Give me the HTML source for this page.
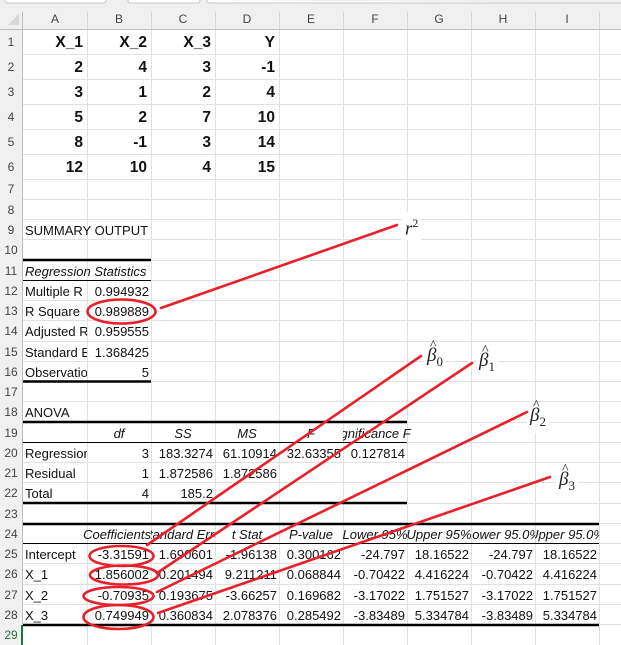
<!DOCTYPE html>
<html><head><meta charset="utf-8">
<style>
html,body{margin:0;padding:0;}
body{width:621px;height:645px;position:relative;overflow:hidden;background:#fff;font-family:"Liberation Sans",Arial,sans-serif;}
.c{position:absolute;height:20px;line-height:21px;font-size:13px;color:#111;white-space:nowrap;overflow:hidden;display:flex;align-items:center;padding:0 2px;box-sizing:border-box;}
.r{justify-content:flex-end;}
.m{justify-content:center;}
.i{font-style:italic;}
.b{font-weight:bold;font-size:15.5px;height:25px;padding-right:4px;}
.h{position:absolute;font-size:12px;color:#444;text-align:center;}
.lbl{position:absolute;font-family:"Liberation Serif",serif;font-style:italic;font-size:19px;color:#222;background:#fff;line-height:22px;}
.lbl sub{font-style:normal;font-size:13px;}
.hat{position:relative;display:inline-block;}
.hat i{position:absolute;left:3px;top:-10px;font-style:normal;font-size:14px;}
</style></head><body>
<svg width="621" height="645" style="position:absolute;left:0;top:0" xmlns="http://www.w3.org/2000/svg">
<rect x="0" y="0" width="621" height="29" fill="#f0f0f0"/>
<rect x="0" y="29" width="23" height="616" fill="#f0f0f0"/>
<path d="M5 0 V1 Q5 3 8 3 H103 Q106 3 106 1 V0 M128 0 V1 Q128 3 131 3 H197 Q200 3 200 1 V0 M207 0 V1 Q207 3 210 3 H621" fill="#fff" stroke="#c8c8c8"/>
<polygon points="8,25 19,25 19,14" fill="#d6d6d6"/>
<g stroke="#e1e1e1" stroke-width="1">
<line x1="87.5" y1="29" x2="87.5" y2="645"/><line x1="151.5" y1="29" x2="151.5" y2="645"/>
<line x1="215.5" y1="29" x2="215.5" y2="645"/><line x1="279.5" y1="29" x2="279.5" y2="645"/>
<line x1="343.5" y1="29" x2="343.5" y2="645"/><line x1="407.5" y1="29" x2="407.5" y2="645"/>
<line x1="471.5" y1="29" x2="471.5" y2="645"/><line x1="535.5" y1="29" x2="535.5" y2="645"/>
<line x1="599.5" y1="29" x2="599.5" y2="645"/>
<line x1="23" y1="54.5" x2="621" y2="54.5"/><line x1="23" y1="79.5" x2="621" y2="79.5"/>
<line x1="23" y1="104.5" x2="621" y2="104.5"/><line x1="23" y1="129.5" x2="621" y2="129.5"/>
<line x1="23" y1="154.5" x2="621" y2="154.5"/><line x1="23" y1="179.5" x2="621" y2="179.5"/>
<line x1="23" y1="199.5" x2="621" y2="199.5"/><line x1="23" y1="219.5" x2="621" y2="219.5"/>
<line x1="23" y1="239.5" x2="621" y2="239.5"/><line x1="23" y1="260.5" x2="621" y2="260.5"/>
<line x1="23" y1="280.5" x2="621" y2="280.5"/><line x1="23" y1="300.5" x2="621" y2="300.5"/>
<line x1="23" y1="320.5" x2="621" y2="320.5"/><line x1="23" y1="341.5" x2="621" y2="341.5"/>
<line x1="23" y1="361.5" x2="621" y2="361.5"/><line x1="23" y1="381.5" x2="621" y2="381.5"/>
<line x1="23" y1="401.5" x2="621" y2="401.5"/><line x1="23" y1="422.5" x2="621" y2="422.5"/>
<line x1="23" y1="442.5" x2="621" y2="442.5"/><line x1="23" y1="462.5" x2="621" y2="462.5"/>
<line x1="23" y1="482.5" x2="621" y2="482.5"/><line x1="23" y1="503.5" x2="621" y2="503.5"/>
<line x1="23" y1="523.5" x2="621" y2="523.5"/><line x1="23" y1="543.5" x2="621" y2="543.5"/>
<line x1="23" y1="563.5" x2="621" y2="563.5"/><line x1="23" y1="584.5" x2="621" y2="584.5"/>
<line x1="23" y1="604.5" x2="621" y2="604.5"/><line x1="23" y1="624.5" x2="621" y2="624.5"/>
</g>
<g stroke="#d4d4d4"><line x1="87.5" y1="12" x2="87.5" y2="29"/><line x1="151.5" y1="12" x2="151.5" y2="29"/><line x1="215.5" y1="12" x2="215.5" y2="29"/><line x1="279.5" y1="12" x2="279.5" y2="29"/><line x1="343.5" y1="12" x2="343.5" y2="29"/><line x1="407.5" y1="12" x2="407.5" y2="29"/><line x1="471.5" y1="12" x2="471.5" y2="29"/><line x1="535.5" y1="12" x2="535.5" y2="29"/><line x1="599.5" y1="12" x2="599.5" y2="29"/></g>
<line x1="0" y1="29.5" x2="621" y2="29.5" stroke="#bdbdbd"/>
<line x1="22.5" y1="12" x2="22.5" y2="645" stroke="#bdbdbd"/>
<line x1="22" y1="625" x2="22" y2="645" stroke="#217346" stroke-width="2"/>
<g stroke="#000">
<line x1="23" y1="260" x2="151" y2="260" stroke-width="2.5"/>
<line x1="23" y1="280.5" x2="151" y2="280.5" stroke-width="1"/>
<line x1="23" y1="381.5" x2="151" y2="381.5" stroke-width="2.5"/>
<line x1="23" y1="422" x2="407" y2="422" stroke-width="2.5"/>
<line x1="23" y1="442.5" x2="407" y2="442.5" stroke-width="1"/>
<line x1="23" y1="503" x2="407" y2="503" stroke-width="2.5"/>
<line x1="23" y1="524" x2="599" y2="524" stroke-width="2.5"/>
<line x1="23" y1="543.5" x2="599" y2="543.5" stroke-width="1"/>
<line x1="23" y1="625" x2="599" y2="625" stroke-width="2.5"/>
</g>
</svg>

<div class="h" style="left:23px;width:64px;top:12px">A</div>
<div class="h" style="left:87px;width:64px;top:12px">B</div>
<div class="h" style="left:151px;width:64px;top:12px">C</div>
<div class="h" style="left:215px;width:64px;top:12px">D</div>
<div class="h" style="left:279px;width:64px;top:12px">E</div>
<div class="h" style="left:343px;width:64px;top:12px">F</div>
<div class="h" style="left:407px;width:64px;top:12px">G</div>
<div class="h" style="left:471px;width:64px;top:12px">H</div>
<div class="h" style="left:535px;width:64px;top:12px">I</div>
<div class="h" style="left:0;width:22px;top:35px">1</div>
<div class="h" style="left:0;width:22px;top:60px">2</div>
<div class="h" style="left:0;width:22px;top:85px">3</div>
<div class="h" style="left:0;width:22px;top:110px">4</div>
<div class="h" style="left:0;width:22px;top:135px">5</div>
<div class="h" style="left:0;width:22px;top:160px">6</div>
<div class="h" style="left:0;width:22px;top:182px">7</div>
<div class="h" style="left:0;width:22px;top:203px">8</div>
<div class="h" style="left:0;width:22px;top:223px">9</div>
<div class="h" style="left:0;width:22px;top:243px">10</div>
<div class="h" style="left:0;width:22px;top:264px">11</div>
<div class="h" style="left:0;width:22px;top:284px">12</div>
<div class="h" style="left:0;width:22px;top:304px">13</div>
<div class="h" style="left:0;width:22px;top:324px">14</div>
<div class="h" style="left:0;width:22px;top:345px">15</div>
<div class="h" style="left:0;width:22px;top:365px">16</div>
<div class="h" style="left:0;width:22px;top:385px">17</div>
<div class="h" style="left:0;width:22px;top:405px">18</div>
<div class="h" style="left:0;width:22px;top:426px">19</div>
<div class="h" style="left:0;width:22px;top:446px">20</div>
<div class="h" style="left:0;width:22px;top:466px">21</div>
<div class="h" style="left:0;width:22px;top:486px">22</div>
<div class="h" style="left:0;width:22px;top:507px">23</div>
<div class="h" style="left:0;width:22px;top:527px">24</div>
<div class="h" style="left:0;width:22px;top:547px">25</div>
<div class="h" style="left:0;width:22px;top:567px">26</div>
<div class="h" style="left:0;width:22px;top:588px">27</div>
<div class="h" style="left:0;width:22px;top:608px">28</div>
<div class="h" style="left:0;width:22px;top:628px;color:#217346">29</div>

<div class="c r b" style="left:23px;width:64px;top:30px">X_1</div>
<div class="c r b" style="left:87px;width:64px;top:30px">X_2</div>
<div class="c r b" style="left:151px;width:64px;top:30px">X_3</div>
<div class="c r b" style="left:215px;width:64px;top:30px">Y</div>
<div class="c r b" style="left:23px;width:64px;top:55px">2</div>
<div class="c r b" style="left:87px;width:64px;top:55px">4</div>
<div class="c r b" style="left:151px;width:64px;top:55px">3</div>
<div class="c r b" style="left:215px;width:64px;top:55px">-1</div>
<div class="c r b" style="left:23px;width:64px;top:80px">3</div>
<div class="c r b" style="left:87px;width:64px;top:80px">1</div>
<div class="c r b" style="left:151px;width:64px;top:80px">2</div>
<div class="c r b" style="left:215px;width:64px;top:80px">4</div>
<div class="c r b" style="left:23px;width:64px;top:105px">5</div>
<div class="c r b" style="left:87px;width:64px;top:105px">2</div>
<div class="c r b" style="left:151px;width:64px;top:105px">7</div>
<div class="c r b" style="left:215px;width:64px;top:105px">10</div>
<div class="c r b" style="left:23px;width:64px;top:130px">8</div>
<div class="c r b" style="left:87px;width:64px;top:130px">-1</div>
<div class="c r b" style="left:151px;width:64px;top:130px">3</div>
<div class="c r b" style="left:215px;width:64px;top:130px">14</div>
<div class="c r b" style="left:23px;width:64px;top:155px">12</div>
<div class="c r b" style="left:87px;width:64px;top:155px">10</div>
<div class="c r b" style="left:151px;width:64px;top:155px">4</div>
<div class="c r b" style="left:215px;width:64px;top:155px">15</div>

<div class="c" style="left:23px;width:140px;top:220px">SUMMARY OUTPUT</div>
<div class="c i" style="left:23px;width:128px;top:261px">Regression Statistics</div>
<div class="c" style="left:23px;width:64px;top:281px">Multiple R</div>
<div class="c r" style="left:87px;width:64px;top:281px">0.994932</div>
<div class="c" style="left:23px;width:64px;top:301px">R Square</div>
<div class="c r" style="left:87px;width:64px;top:301px">0.989889</div>
<div class="c" style="left:23px;width:64px;top:321px">Adjusted R Square</div>
<div class="c r" style="left:87px;width:64px;top:321px">0.959555</div>
<div class="c" style="left:23px;width:64px;top:342px">Standard Error</div>
<div class="c r" style="left:87px;width:64px;top:342px">1.368425</div>
<div class="c" style="left:23px;width:64px;top:362px">Observations</div>
<div class="c r" style="left:87px;width:64px;top:362px">5</div>

<div class="c" style="left:23px;width:64px;top:402px">ANOVA</div>
<div class="c m i" style="left:87px;width:64px;top:423px">df</div>
<div class="c m i" style="left:151px;width:64px;top:423px">SS</div>
<div class="c m i" style="left:215px;width:64px;top:423px">MS</div>
<div class="c m i" style="left:279px;width:64px;top:423px">F</div>
<div class="c i" style="left:343px;width:72px;top:423px;padding-left:0"><span style="margin-left:-14px">Significance F</span></div>
<div class="c" style="left:23px;width:64px;top:443px">Regression</div>
<div class="c r" style="left:87px;width:64px;top:443px">3</div>
<div class="c r" style="left:151px;width:64px;top:443px">183.3274</div>
<div class="c r" style="left:215px;width:64px;top:443px">61.10914</div>
<div class="c r" style="left:279px;width:64px;top:443px">32.63355</div>
<div class="c r" style="left:343px;width:64px;top:443px">0.127814</div>
<div class="c" style="left:23px;width:64px;top:463px">Residual</div>
<div class="c r" style="left:87px;width:64px;top:463px">1</div>
<div class="c r" style="left:151px;width:64px;top:463px">1.872586</div>
<div class="c r" style="left:215px;width:64px;top:463px">1.872586</div>
<div class="c" style="left:23px;width:64px;top:483px">Total</div>
<div class="c r" style="left:87px;width:64px;top:483px">4</div>
<div class="c r" style="left:151px;width:64px;top:483px">185.2</div>

<div class="c r i" style="left:23px;width:128px;top:524px;padding-right:0">Coefficients</div>
<div class="c m i" style="left:151px;width:64px;top:524px">Standard Error</div>
<div class="c m i" style="left:215px;width:64px;top:524px">t Stat</div>
<div class="c m i" style="left:279px;width:64px;top:524px">P-value</div>
<div class="c m i" style="left:343px;width:64px;top:524px">Lower 95%</div>
<div class="c m i" style="left:407px;width:64px;top:524px">Upper 95%</div>
<div class="c m i" style="left:471px;width:64px;top:524px">Lower 95.0%</div>
<div class="c m i" style="left:535px;width:64px;top:524px">Upper 95.0%</div>

<div class="c" style="left:23px;width:64px;top:544px">Intercept</div>
<div class="c r" style="left:87px;width:64px;top:544px">-3.31591</div>
<div class="c r" style="left:151px;width:64px;top:544px">1.690601</div>
<div class="c r" style="left:215px;width:64px;top:544px">-1.96138</div>
<div class="c r" style="left:279px;width:64px;top:544px">0.300162</div>
<div class="c r" style="left:343px;width:64px;top:544px">-24.797</div>
<div class="c r" style="left:407px;width:64px;top:544px">18.16522</div>
<div class="c r" style="left:471px;width:64px;top:544px">-24.797</div>
<div class="c r" style="left:535px;width:64px;top:544px">18.16522</div>

<div class="c" style="left:23px;width:64px;top:564px">X_1</div>
<div class="c r" style="left:87px;width:64px;top:564px">1.856002</div>
<div class="c r" style="left:151px;width:64px;top:564px">0.201494</div>
<div class="c r" style="left:215px;width:64px;top:564px">9.211211</div>
<div class="c r" style="left:279px;width:64px;top:564px">0.068844</div>
<div class="c r" style="left:343px;width:64px;top:564px">-0.70422</div>
<div class="c r" style="left:407px;width:64px;top:564px">4.416224</div>
<div class="c r" style="left:471px;width:64px;top:564px">-0.70422</div>
<div class="c r" style="left:535px;width:64px;top:564px">4.416224</div>

<div class="c" style="left:23px;width:64px;top:585px">X_2</div>
<div class="c r" style="left:87px;width:64px;top:585px">-0.70935</div>
<div class="c r" style="left:151px;width:64px;top:585px">0.193675</div>
<div class="c r" style="left:215px;width:64px;top:585px">-3.66257</div>
<div class="c r" style="left:279px;width:64px;top:585px">0.169682</div>
<div class="c r" style="left:343px;width:64px;top:585px">-3.17022</div>
<div class="c r" style="left:407px;width:64px;top:585px">1.751527</div>
<div class="c r" style="left:471px;width:64px;top:585px">-3.17022</div>
<div class="c r" style="left:535px;width:64px;top:585px">1.751527</div>

<div class="c" style="left:23px;width:64px;top:605px">X_3</div>
<div class="c r" style="left:87px;width:64px;top:605px">0.749949</div>
<div class="c r" style="left:151px;width:64px;top:605px">0.360834</div>
<div class="c r" style="left:215px;width:64px;top:605px">2.078376</div>
<div class="c r" style="left:279px;width:64px;top:605px">0.285492</div>
<div class="c r" style="left:343px;width:64px;top:605px">-3.83489</div>
<div class="c r" style="left:407px;width:64px;top:605px">5.334784</div>
<div class="c r" style="left:471px;width:64px;top:605px">-3.83489</div>
<div class="c r" style="left:535px;width:64px;top:605px">5.334784</div>

<div class="lbl" style="left:402px;top:212px;padding:0 3px">r<sup style="font-style:normal;font-size:12px">2</sup></div>
<div class="lbl" style="left:424px;top:345px;padding:0 3px"><span class="hat">β<i>^</i></span><sub>0</sub></div>
<div class="lbl" style="left:476px;top:350px;padding:0 3px"><span class="hat">β<i>^</i></span><sub>1</sub></div>
<div class="lbl" style="left:527px;top:405px;padding:0 3px"><span class="hat">β<i>^</i></span><sub>2</sub></div>
<div class="lbl" style="left:556px;top:469px;padding:0 3px"><span class="hat">β<i>^</i></span><sub>3</sub></div>

<svg width="621" height="645" style="position:absolute;left:0;top:0" xmlns="http://www.w3.org/2000/svg">
<g fill="none" stroke="#e8202a" stroke-width="2.6" stroke-linecap="round">
<ellipse cx="121.5" cy="311.5" rx="34" ry="12"/>
<ellipse cx="121.5" cy="556" rx="32" ry="10"/>
<ellipse cx="124" cy="575" rx="34" ry="9.5"/>
<ellipse cx="118.5" cy="596" rx="35" ry="9"/>
<ellipse cx="118.5" cy="617" rx="35" ry="12"/>
<line x1="161" y1="308" x2="397" y2="225"/>
<line x1="147" y1="545" x2="421" y2="356"/>
<line x1="157" y1="573" x2="472" y2="363"/>
<line x1="157" y1="592" x2="527" y2="412"/>
<line x1="158" y1="613" x2="550" y2="477"/>
</g>
</svg>
</body></html>
